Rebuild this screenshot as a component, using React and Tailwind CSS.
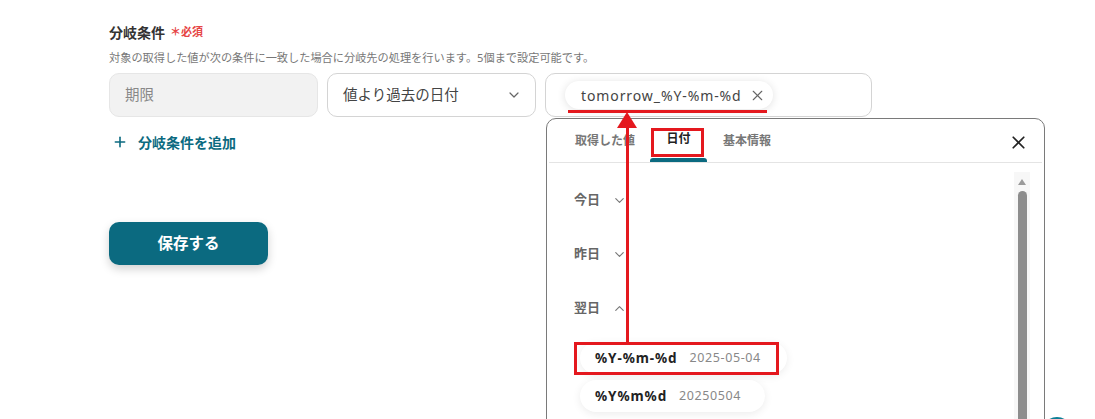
import React from "react";
import { ChevronDown, ChevronUp, Plus, X } from "lucide-react";

const font = { fontFamily: '"Noto Sans", "Noto Sans CJK JP", sans-serif' };

const Group = ({ label, open }) => (
  <div className="flex items-center h-[54px] pl-[27px] text-[13px] font-bold text-[#666]">
    <span>{label}</span>
    {open ? (
      <ChevronUp size={15} strokeWidth={1.8} className="ml-[12px] text-[#777]" />
    ) : (
      <ChevronDown size={15} strokeWidth={1.8} className="ml-[12px] text-[#777]" />
    )}
  </div>
);

const FormatChip = ({ fmt, sample, w }) => (
  <div className={`flex items-center h-[32px] rounded-full bg-white shadow-[0_2px_8px_rgba(0,0,0,0.08)] pl-[15px] ${w}`}>
    <span className="text-[13.5px] font-bold tracking-[0.9px] text-[#222]">{fmt}</span>
    <span className="ml-[12px] text-[12.5px] tracking-[0.6px] text-[#888]">{sample}</span>
  </div>
);

export default function App() {
  return (
    <div className="relative w-[1095px] h-[419px] overflow-hidden bg-white" style={font}>
      <div className="pl-[109px] pt-[22px]">
        <div className="flex items-center h-[20px]">
          <span className="text-[14px] font-bold text-[#333]">分岐条件</span>
          <span className="ml-[5px] text-[11px] font-bold text-[#e64545]">＊必須</span>
        </div>
        <div className="mt-[8px] h-[16px] text-[11.2px] leading-[16px] text-[#777]">
          対象の取得した値が次の条件に一致した場合に分岐先の処理を行います。5個まで設定可能です。
        </div>
        <div className="mt-[7px] flex gap-[9px]">
          <div className="flex items-center w-[209px] h-[44px] rounded-[10px] bg-[#f2f2f2] border border-[#e6e6e6] pl-[15px] text-[14.5px] text-[#888]">
            期限
          </div>
          <div className="flex items-center justify-between w-[209px] h-[44px] rounded-[10px] bg-white border border-[#d4d4d4] pl-[15px] pr-[13px] text-[14.5px] text-[#444]">
            <span>値より過去の日付</span>
            <ChevronDown size={16} strokeWidth={1.8} className="text-[#666]" />
          </div>
          <div className="flex items-center w-[327px] h-[44px] rounded-[10px] bg-white border border-[#d4d4d4] pl-[19px]">
            <div className="flex items-center h-[28px] rounded-full bg-white shadow-[0_1px_8px_rgba(0,0,0,0.12)] pl-[16px] pr-[7px] text-[14px] text-[#444]">
              <span className="tracking-[0.9px]">tomorrow_%Y-%m-%d</span>
              <X size={17} strokeWidth={1.6} className="ml-[7px] text-[#666]" />
            </div>
          </div>
        </div>
        <div className="mt-[15px] flex items-center h-[20px] pl-[3px] text-[14px] font-bold text-[#0b6a80]">
          <Plus size={16} strokeWidth={2.4} />
          <span className="ml-[10px]">分岐条件を追加</span>
        </div>
        <button className="mt-[70px] w-[159px] h-[43px] rounded-[10px] bg-[#0b6a80] text-white text-[15.5px] font-bold shadow-[0_4px_10px_rgba(0,0,0,0.18)]">
          保存する
        </button>
      </div>

      {/* popup */}
      <div className="absolute left-[546px] top-[118px] w-[499px] h-[320px] rounded-[10px] border border-[#7a7a7a] bg-white">
        <div className="relative flex items-end h-[44px] mx-[2px] border-b border-[#e4e4e4] pl-[26px]">
          <div className="h-[43px] flex items-center text-[12px] font-bold text-[#777]">取得した値</div>
          <div className="ml-[15px] w-[57px] h-[43px] flex flex-col items-center">
            <div className="flex-1 flex items-center text-[12px] font-bold text-[#222]">日付</div>
            <div className="w-full h-[4px] rounded-t-[3px] bg-[#0b6a80]" />
          </div>
          <div className="ml-[16px] h-[43px] flex items-center text-[12px] font-bold text-[#777]">基本情報</div>
          <X size={21} strokeWidth={2} className="absolute right-[13px] top-[13px] text-[#222]" />
        </div>
        <div className="flex">
          <div className="flex-1 pt-[10px]">
            <Group label="今日" />
            <Group label="昨日" />
            <Group label="翌日" open />
            <div className="pl-[33px] pt-[7px] flex flex-col gap-[6px]">
              <FormatChip fmt="%Y-%m-%d" sample="2025-05-04" w="w-[207px]" />
              <FormatChip fmt="%Y%m%d" sample="20250504" w="w-[185px]" />
            </div>
          </div>
          <div className="w-[16px] mr-[14px] mt-[9px] h-[260px] bg-[#f7f7f7] flex flex-col items-center">
            <div className="mt-[7px] w-0 h-0 border-l-[4px] border-r-[4px] border-b-[6px] border-l-transparent border-r-transparent border-b-[#9a9a9a]" />
            <div className="mt-[6px] w-[9px] flex-1 rounded-full bg-[#8d8d8d]" />
          </div>
        </div>
      </div>

      {/* floating button peeking */}
      <div className="absolute left-[1042px] top-[417px] w-[30px] h-[30px] rounded-full bg-[#0b7f96]" />

      {/* annotations */}
      <div className="absolute left-[568px] top-[110px] w-[199px] h-[3px] bg-[#e4181e]" />
      <div className="absolute left-[651px] top-[128px] w-[53px] h-[29px] border-[3px] border-[#e4181e]" />
      <div className="absolute left-[574px] top-[342px] w-[205px] h-[33px] border-[3px] border-[#e4181e]" />
      <div className="absolute left-[626px] top-[126px] w-[3px] h-[217px] bg-[#e4181e]" />
      <div className="absolute left-[617px] top-[112px] w-0 h-0 border-l-[10px] border-r-[10px] border-b-[16px] border-l-transparent border-r-transparent border-b-[#e4181e]" />
    </div>
  );
}
